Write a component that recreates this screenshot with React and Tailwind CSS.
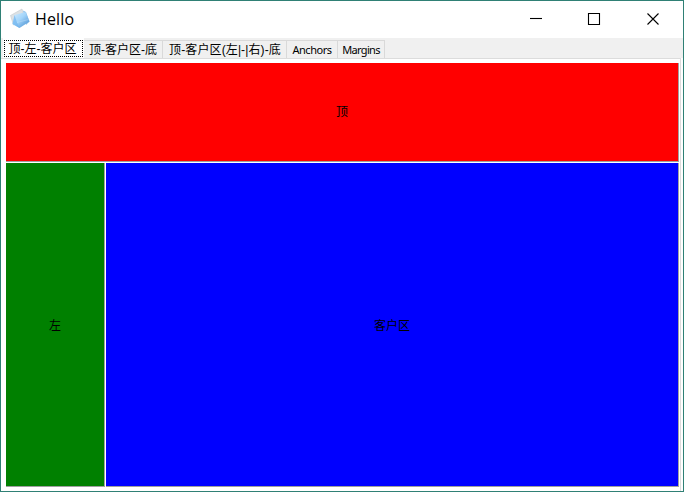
const cjk = "font-['Liberation_Sans','Noto_Sans_CJK_SC',sans-serif]";
const tabBase = "h-[18px] shrink-0 whitespace-nowrap border-r border-t border-[#d9d9d9] bg-[#f0f0f0] flex items-center justify-center leading-4 text-black";

function TitleBar() {
  return (
    <header className="flex h-[37px] shrink-0 items-center bg-white">
      <svg width="22" height="22" viewBox="0 0 22 22" className="-mt-0.5 ml-2 shrink-0">
        <defs>
          <linearGradient id="front" x1="0" y1="0" x2="1" y2="1">
            <stop offset="0" stopColor="#d4ecff" />
            <stop offset="0.45" stopColor="#a3d5fa" />
            <stop offset="1" stopColor="#3d86cc" />
          </linearGradient>
        </defs>
        <path d="M1.5 7.5 13 1 16 13 4.5 17Z" fill="#dce1e4" stroke="#c3cace" strokeWidth=".6" />
        <path d="M14 2.5 17 4 20.5 13.5 17 17Z" fill="#8dbfe8" />
        <path d="M5.5 7 16.5 4 20.5 13.5 10.5 20 3.5 16Z" fill="url(#front)" />
        <path d="M5.5 7 8 14.5 10.5 20 3.5 16Z" fill="#6db4ee" opacity=".65" />
        <path d="M8 14.5 19.5 11.5" fill="none" stroke="#d9efff" strokeWidth="1" opacity=".3" />
      </svg>
      <div className="-mt-px ml-1 font-['Open_Sans','Noto_Sans',sans-serif] text-[16px] leading-5 tracking-[0.15px] text-black">
        Hello
      </div>
      <div className="-mt-px ml-auto mr-6 flex">
        {["M0 5.5H12", "M.5 .5H11.5V11.5H.5Z", "M1.5 .5 12.5 11.5M12.5 .5 1.5 11.5"].map((d) => (
          <svg key={d} width="12" height="12" viewBox="0 0 12 12" fill="none" stroke="#000" strokeWidth="1.1" className="mr-[46px] overflow-visible last:mr-px">
            <path d={d} />
          </svg>
        ))}
      </div>
    </header>
  );
}

export default function App() {
  return (
    <div className={`flex h-[492px] w-[684px] flex-col overflow-hidden border border-[#2f8075] bg-white text-[12px] ${cjk}`}>
      <TitleBar />
      <nav className="flex h-5 shrink-0 items-end bg-[#f0f0f0] pl-0.5">
        <div className="flex h-5 w-[81px] items-center justify-center bg-white">
          <div className="flex h-[17px] w-[79px] items-center justify-center whitespace-nowrap border border-dotted border-black pr-0.5 pt-px leading-4 text-black">
            顶-左-客户区
          </div>
        </div>
        <div className={`${tabBase} w-[79px]`}>顶-客户区-底</div>
        <div className={`${tabBase} w-[124px] pl-px tracking-[0.12px]`}>顶-客户区(左|-|右)-底</div>
        <div className={`${tabBase} w-[51px] font-['Noto_Sans',sans-serif] text-[11px] tracking-[-0.45px]`}>Anchors</div>
        <div className={`${tabBase} w-[47px] font-['Noto_Sans',sans-serif] text-[11px] tracking-[-0.65px]`}>Margins</div>
      </nav>
      <main className="mr-0.5 flex min-h-0 flex-1 flex-col border-r border-t border-[#dcdcdc] pb-1 pl-[5px] pr-px pt-1">
        <section className="flex h-[99px] shrink-0 items-center justify-center border-b border-r border-[#a0a0a0] bg-[#ff0000]">
          顶
        </section>
        <div className="mt-px flex min-h-0 flex-1">
          <section className="flex w-[99px] shrink-0 items-center justify-center border-b border-r border-[#a0a0a0] bg-[#008000] pt-0.5">
            左
          </section>
          <section className="ml-px flex flex-1 items-center justify-center border-b border-r border-[#a0a0a0] bg-[#0000ff] pt-0.5">
            客户区
          </section>
        </div>
      </main>
    </div>
  );
}
